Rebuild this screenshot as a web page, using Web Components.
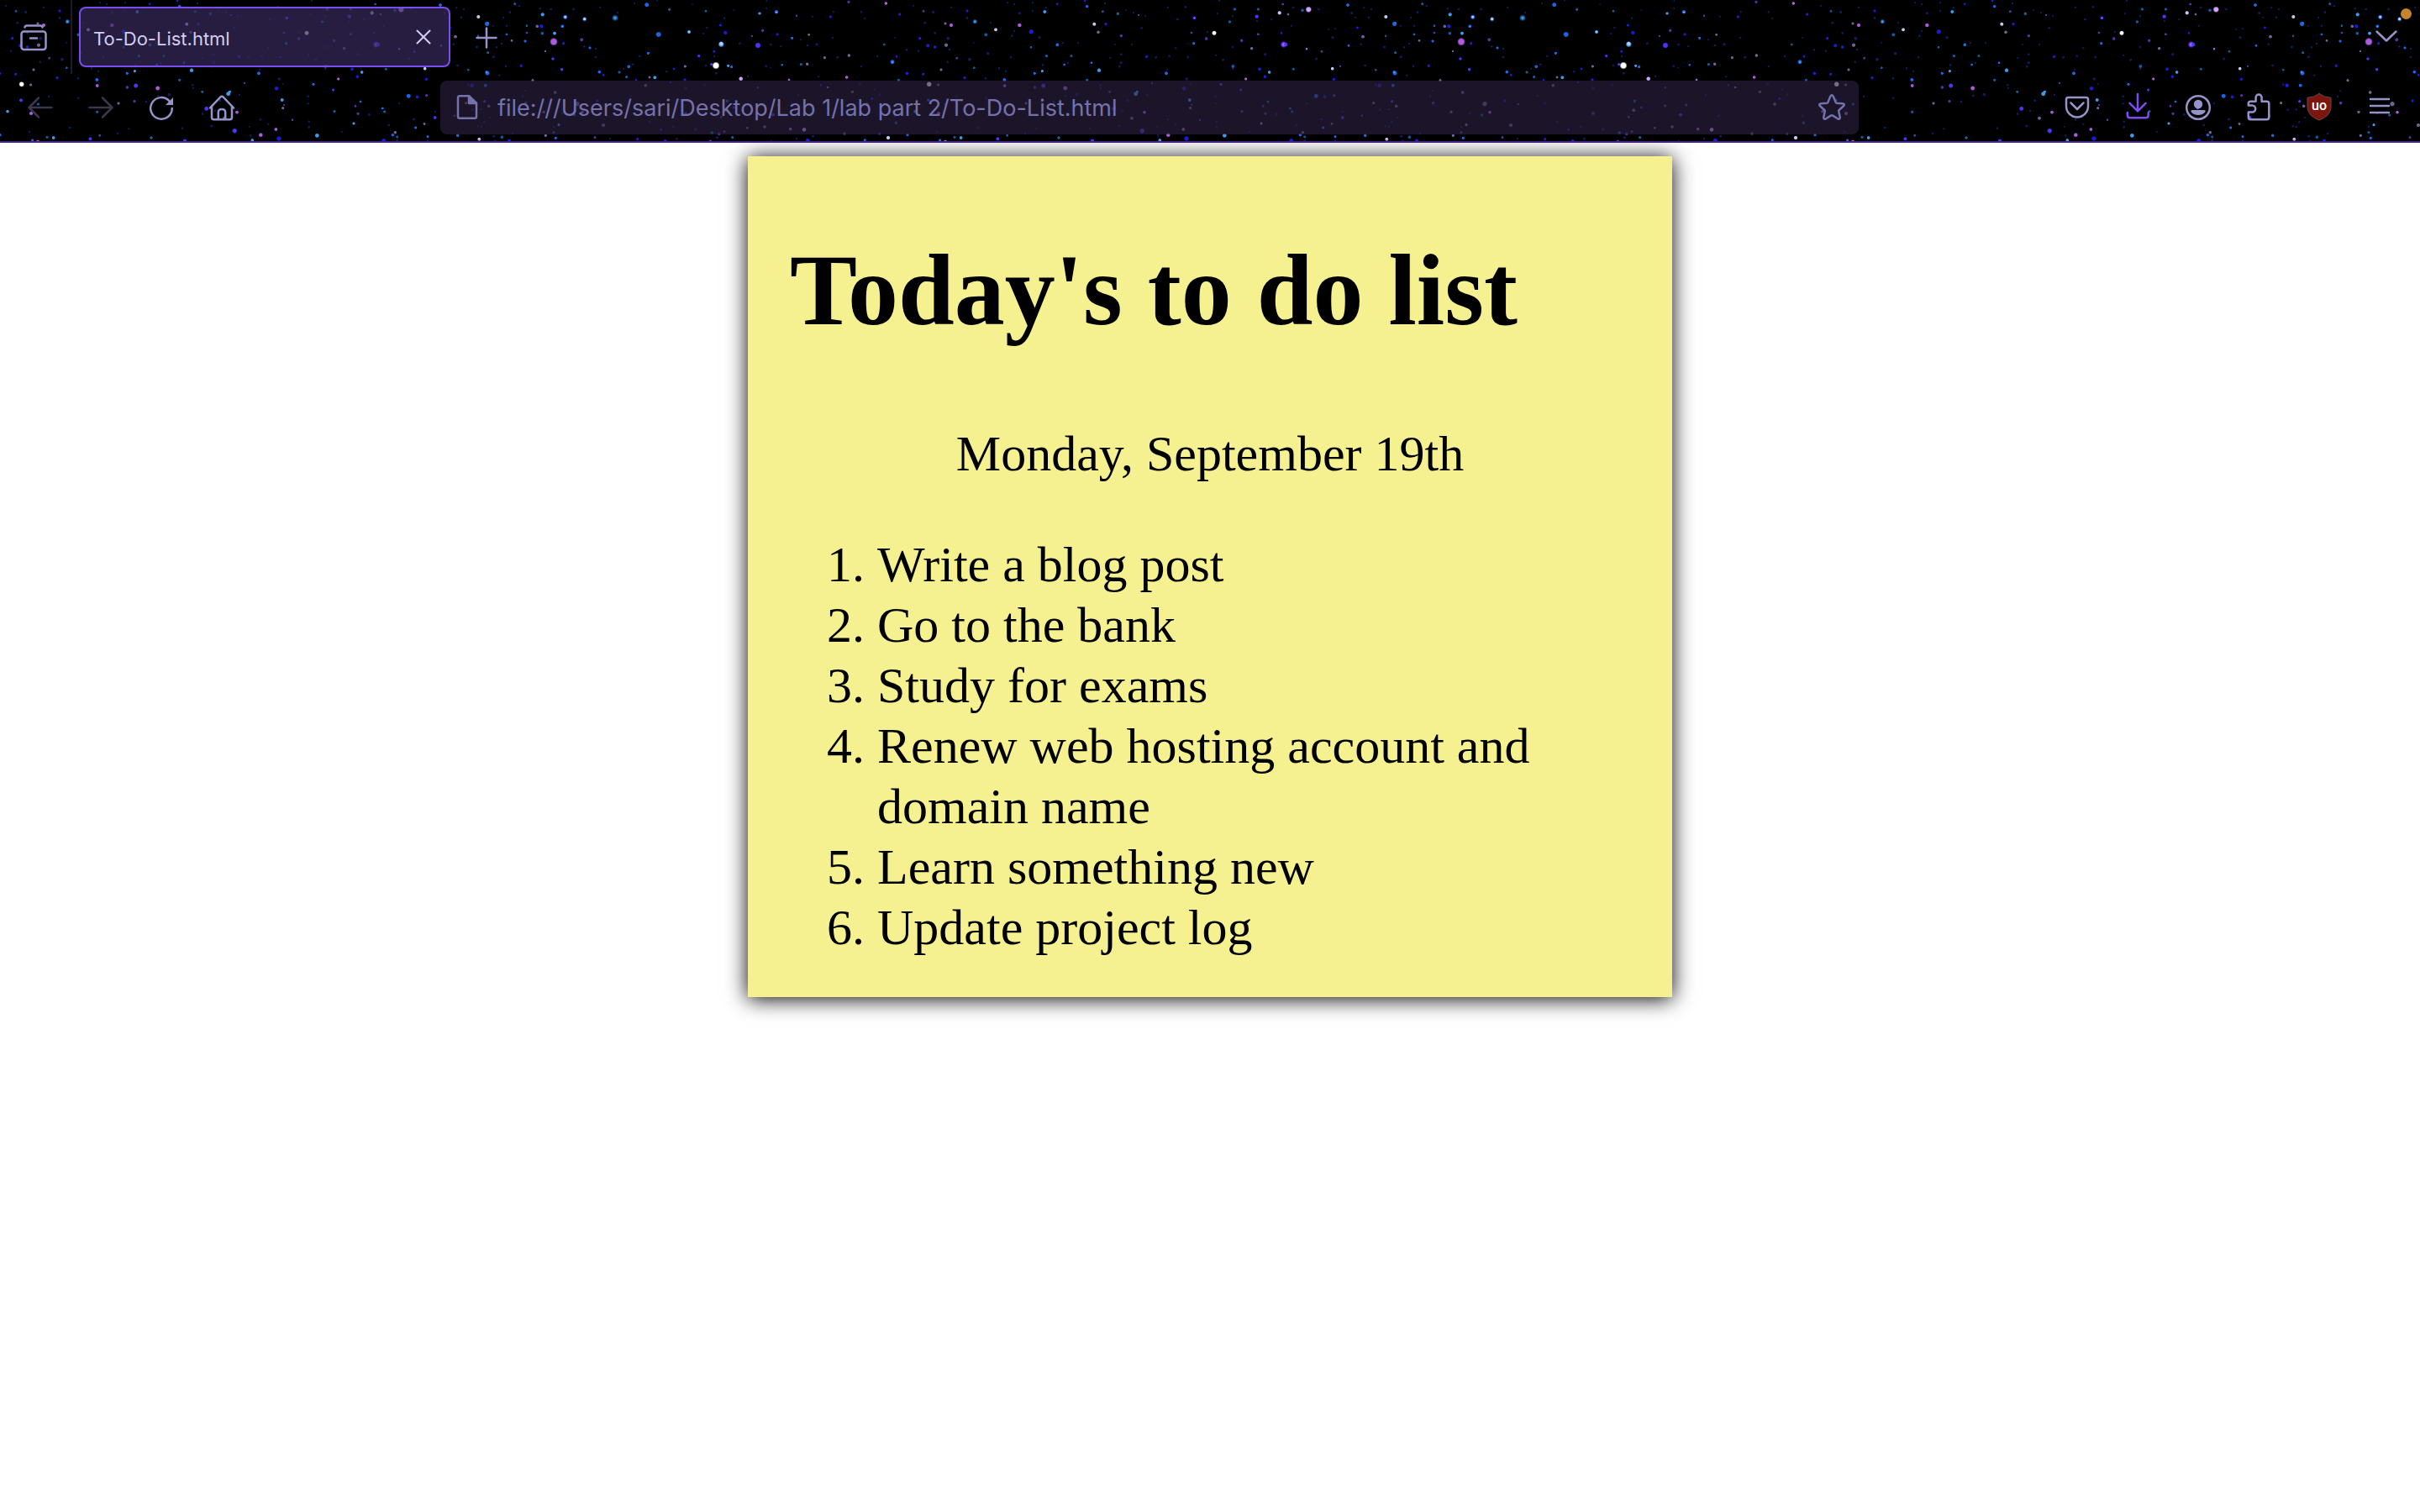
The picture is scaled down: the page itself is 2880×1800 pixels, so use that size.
<!DOCTYPE html>
<html lang="en">
<head>
<meta charset="utf-8">
<title>To-Do-List.html</title>
<style>
  html { background: #fff; }
  body { margin: 0; }
</style>
</head>
<body>
<browser-window>
  <sticky-note>
    <span slot="title">Today's to do list</span>
    <span slot="date">Monday, September 19th</span>
    <todo-list items="Write a blog post|Go to the bank|Study for exams|Renew web hosting account and domain name|Learn something new|Update project log"></todo-list>
  </sticky-note>
</browser-window>

<script>
const ICONS = {
  sidebar: '<rect x="1.5" y="9.5" width="29" height="21.5" rx="3"/><path d="M5.5 4.5Q6 2.5 8 2.5H24Q26 2.5 26.500 4.500"/><path d="M12 17.500H20"/>',
  close: '<path d="M8.500 8.500l15 15M23.500 8.500l-15 15"/>',
  plus: '<path d="M4.500 17H27.500M16 5.500V28.500"/>',
  chevron: '<path d="M4.500 9.500L16 20.500 27.500 9.500"/>',
  back: '<path d="M2.500 16H29.500M14 4.500L2.500 16 14 27.500"/>',
  forward: '<path d="M2.500 16H29.500M18 4.500L29.500 16 18 27.500"/>',
  reload: '<path d="M28.800 17A12.800 12.800 0 1 1 25.500 8.300"/><path d="M30 4V13H21Z" fill="currentColor" stroke="none"/>',
  home: '<path d="M2 16.500L14.200 3.600Q16 1.800 17.800 3.600L30 16.500"/><path d="M4 14.500V27.500Q4 30.300 6.500 30.300H25.500Q28 30.300 28 27.500V14.500"/><path d="M11.800 30V21.500Q11.800 18 16 18T20.200 21.500V30"/>',
  page: '<path d="M18 2.200H7Q5 2.200 5 4.500V26.500Q5 28.800 7 28.800H25Q27 28.800 27 26.500V11Z"/><path d="M18 2.200V11H27Z" fill="currentColor"/>',
  star: '<path d="M14.300 2.600Q16 -.3 17.700 2.600L20.600 9.700Q21 10.600 22 10.700L28.800 11.200Q32.300 11.700 29.900 14.300L24.700 19Q24 19.700 24.200 20.600L25.700 27.300Q26 30.700 23 29.300L17.200 25.600Q16 24.900 14.800 25.600L9 29.300Q6 30.700 6.300 27.300L7.800 20.600Q8 19.700 7.300 19L2.100 14.300Q-.3 11.700 3.200 11.200L10 10.700Q11 10.600 11.400 9.700Z"/>',
  pocket: '<path d="M5.500 4H26.500Q29 4 29 6.500V14.500A13 13 0 0 1 3 14.500V6.500Q3 4 5.500 4Z"/><path d="M8.500 10.500L16 18 23.500 10.500"/>',
  download: '<path d="M16 0V20M6.500 10.800L16 20.300 25.500 10.800"/><path d="M3.800 22V25Q3.800 28.300 7 28.300H25.500Q28.700 28.300 28.700 25V22"/>',
  account: '<circle cx="16" cy="16" r="13.800"/><circle cx="16" cy="12" r="5.200" fill="currentColor" stroke="none"/><path d="M9 19H23Q25.500 19 24.200 21.200Q21.500 25 16 25T7.800 21.200Q6.500 19 9 19Z" fill="currentColor" stroke="none"/>',
  puzzle: '<path d="M12.600 8.800V4A3.500 3.500 0 0 1 19.600 4V8.800H25.500Q28.300 8.800 28.300 11.500V27.500Q28.300 30.200 25.500 30.200H6.500Q3.800 30.200 3.800 27.500V21.500H8.200A4 4 0 0 0 8.200 13.500H3.800V11.500Q3.800 8.800 6.500 8.800Z"/>',
  shield: '<path d="M16-.5Q10 4 2 4.300V14.500C2 23 8 28 16 31C24 28 30 23 30 14.500V4.300Q22 4 16-.5Z" fill="#7b150e" stroke="#6a4a4a" stroke-width="1"/><text x="16" y="18.500" text-anchor="middle" font-family="Roboto, sans-serif" font-size="16" font-weight="500" fill="#fff" stroke="none">uo</text>',
  menu: '<path d="M5 6H27M5 14H27M5 22H27"/>'
};

/* Star positions, four 270px panels to a 1080px tile: x, y (thirds of a pixel), colour key, radius. */
const INK = { b:'#1c66ea', d:'#1420d8', n:'#0b2a8c', c:'#3f9bea', w:'#b9cdf2', W:'#ffffff', p:'#b05adf', v:'#5a32a8', g:'#6a6690', i:'#4c32ff', l:'#cfa2ff', t:'#155a9c' };
const PANELS = [
 '36,64,t,4 36,64,c,2 45,44,n,1.5 149,17,b,3 106,12,n,1.3 187,2,n,1.2 230,34,t,2 312,15,n,1 360,40,t,1.8 460,35,n,1.3 426,65,n,1.6 412,90,d,2 364,99,n,1.6 430,117,d,2.6 351,120,n,1.4 191,123,b,3.6 300,114,c,2.5 301,114,w,1.3 415,158,c,3.8 415,156,w,2.6 481,155,n,1.8 525,129,v,1.4 563,109,v,2 546,162,i,3.8 592,159,n,1.8 628,166,n,1.4 615,123,d,2 668,136,b,2 728,124,g,1.8 699,142,n,1.4 723,162,n,1.8 756,158,n,2 552,48,c,2.1 612,43,b,2.7 612,43,w,1 684,56,v,1.6 740,59,n,1.4 577,29,n,1.4 577,3,n,1.2 805,60,d,2 784,206,g,2 722,229,g,2.2 700,230,t,2 632,232,b,1.6 575,236,n,1.8 590,242,n,1.2 154,190,b,2 124,200,n,1.6 335,200,i,2 389,184,d,1.8 391,200,n,1.5 286,237,g,2 396,234,W,4.6 380,230,i,2 440,235,c,2 452,239,b,2 397,262,n,1.8 360,235,n,1.6 85,238,b,2.3 100,230,n,1.6 66,245,n,1.4 51,258,t,2 77,275,t,2 246,246,d,1.8 220,256,n,1.6 159,276,g,1.9 178,277,c,2.4 111,286,d,1.7 285,285,d,2 485,281,l,2.8 511,272,n,1.6 657,285,p,1.8 763,274,n,1.4 145,305,g,2.3 233,294,d,1.6 288,315,n,2 356,304,n,1.6 545,313,v,1.6 770,304,d,1.6 795,312,p,1.8 115,370,n,1.8 90,342,n,1.5 20,372,v,1.8 288,405,t,2.2 436,361,t,2.2 433,394,g,2.4 415,418,t,1.8 460,384,v,1.8 545,378,t,2 620,375,v,2 600,410,i,2.4 735,415,n,1.8 690,340,n,1.5 158,435,n,1.8 200,463,d,2 243,452,n,1.8 323,462,n,2.2 382,474,t,2.3 407,478,v,2.2 426,470,v,2 455,491,t,2 400,492,n,2 508,457,g,1.8 570,453,g,2.2 662,461,p,2.2 711,463,l,2.8 724,502,d,3 684,496,n,1.6 743,487,n,1.8 116,497,d,2 256,496,n,1.8 215,504,d,2.4 376,505,v,2.2 18,495,n,1.4 594,505,n,1.4',
 '193,12,p,2.2 60,7,v,2 105,43,n,1.6 118,65,n,1.4 242,51,d,2 291,20,n,1.4 327,40,t,1.8 362,43,n,2 332,82,n,1.8 405,84,g,2 426,90,p,2.5 426,27,n,1.4 483,39,d,2 483,64,n,1.8 511,77,t,3 511,77,c,1.7 585,106,w,2.4 567,82,n,1.5 550,124,t,2.4 643,128,n,1.8 651,111,n,1.4 670,90,p,2.7 670,47,n,2 627,10,n,1.4 651,15,n,1.4 716,10,n,1.4 716,38,n,1.4 760,42,c,2.4 764,27,n,1.4 805,14,d,1.6 712,113,d,3.2 741,134,n,2 805,160,b,2.4 711,169,t,1.8 766,200,t,2.1 753,232,n,1.8 751,254,c,2 724,262,b,2 314,137,d,2.1 343,163,d,2.5 368,168,d,2.2 368,118,n,1.7 415,137,n,2.4 408,161,g,2.6 420,177,n,1.8 187,159,t,1.8 225,134,n,1.2 267,178,n,1.8 308,182,n,1.6 231,202,d,1.8 216,221,b,3 216,221,c,1.5 163,200,n,1.5 61,198,g,2.2 20,205,n,1.8 3,135,n,1.7 5,43,n,1.4 104,238,n,1.5 53,276,p,2.2 268,262,d,2.3 326,265,d,1.9 238,286,t,1.9 390,249,g,2 413,221,n,1.6 446,208,v,1.7 492,212,n,2.3 506,152,n,1.3 508,242,t,1.8 557,191,n,2.2 639,205,n,1.7 597,244,n,1.6 621,254,n,1.6 549,280,n,1.7 474,278,d,2 616,285,b,2.4 347,301,W,3.4 380,303,g,2 100,300,n,2 73,328,g,2 153,320,n,1.8 172,338,n,1.8 143,352,d,2 126,372,g,2.3 345,358,i,2.4 297,398,c,2.2 381,405,p,2.5 406,372,t,2 229,439,t,2.2 225,415,n,1.7 45,477,g,2 170,478,v,1.8 270,482,b,2 201,492,w,2.6 118,500,b,1.8 386,501,b,2 405,506,p,2.5 438,490,t,2 461,492,c,2.3 375,471,n,1.8 520,456,n,1.8 617,306,p,2.3 617,400,t,2 693,369,g,2 724,312,v,2.1 755,306,i,3.1 750,362,v,2 792,364,n,1.7 592,496,i,2.4 626,484,t,1.8 690,476,n,1.6 730,460,n,1.4 550,350,n,1.6 445,344,n,1.6',
 '127,86,w,2.5 168,86,d,2 141,115,g,2.2 101,23,b,2.1 94,2,d,1.6 157,41,t,1.8 211,49,t,2.2 165,12,n,1.5 285,54,v,1.6 309,58,n,1.5 267,45,n,1.3 239,37,n,1.2 223,128,v,2.1 296,100,n,1.6 424,69,n,1.8 453,25,n,1.8 484,64,i,2.3 484,64,l,.8 390,27,n,1.2 482,155,b,2 474,117,v,1.8 527,138,v,2.2 530,115,n,1.5 555,118,W,3 566,49,n,1.4 573,2,n,1.6 628,33,t,2.1 621,58,n,1.6 610,78,t,2.1 653,145,v,2.1 689,173,c,2 689,173,g,1.8 621,168,n,1.7 712,122,v,1.8 795,118,d,1.7 712,33,t,2 707,59,i,2.7 707,75,n,1.4 788,46,w,2.6 800,15,v,1.8 760,70,n,1.5 803,159,i,4.2 803,159,p,2.4 737,194,n,2 587,214,n,1.8 562,197,n,1.5 461,204,n,1.9 418,172,n,1.6 395,200,n,1.8 347,205,n,1.8 314,202,d,2.1 262,158,n,1.5 223,194,n,1.7 223,224,n,2 217,238,n,1.8 201,158,n,1.2 184,207,n,1.4 144,251,c,2.7 117,224,b,1.8 45,200,t,1.9 33,225,n,1.8 20,231,b,1.8 15,154,n,1.5 69,153,n,1.3 101,286,t,2 384,262,b,2.4 387,248,n,1.4 457,282,n,2.1 622,237,t,2.4 622,246,n,1.5 668,282,p,2 717,247,d,2.3 736,274,d,2.2 752,258,c,2.2 23,315,p,3 64,338,n,2.3 25,342,n,1.8 148,304,n,1.7 150,315,n,1.5 182,328,t,1.9 275,335,c,3 280,328,c,2 333,297,v,1.4 315,339,n,1.4 447,316,d,2.8 467,357,c,2.4 470,386,g,2 475,375,v,1.4 470,299,n,1.3 579,301,b,2 560,344,n,1.7 560,370,n,1.4 650,321,i,1.9 747,363,b,1.8 729,379,v,1.8 654,398,t,2 738,406,v,2 778,409,n,1.9 723,441,c,2 197,388,i,3 183,407,n,1.8 245,359,n,1.9 306,401,p,2.3 228,395,n,1.6 261,422,g,2.4 298,467,i,3.3 390,427,n,1.8 418,443,n,1.6 445,462,p,2.3 504,428,v,1.7 351,452,n,1.3 391,482,p,2.8 361,501,c,2.3 456,495,d,3.2 592,484,c,2.9 563,454,n,1.8 563,434,n,1.6 120,502,i,2.3 111,458,n,1.7 0,492,t,2.2 215,450,n,1.8 355,484,n,1.6 680,470,n,1.4',
 '82,34,l,3.8 60,37,t,2.2 28,27,n,1.6 9,51,g,1.8 118,33,n,1.8 222,18,b,2.3 236,47,n,1.9 250,62,n,1.4 296,62,n,1.7 280,28,n,1.4 306,33,n,1.4 256,99,d,1.9 276,131,g,2.4 225,163,b,1.8 168,134,n,2 154,104,n,1.3 177,103,n,1.3 269,158,n,1.7 358,60,w,2.5 389,85,c,2.9 389,85,b,3 357,128,t,1.6 352,168,n,1.9 392,188,t,1.9 412,203,n,1.9 423,169,n,1.7 441,156,n,1.7 459,123,b,1.8 460,92,n,1.6 447,63,n,1.4 471,44,n,1.8 477,145,g,1.8 488,14,t,1.9 503,21,n,1.6 531,92,t,1.8 531,117,v,1.8 525,147,b,2 587,52,c,2.6 579,31,n,1.6 617,33,n,1.6 568,94,g,2.2 583,94,d,2.7 586,119,t,2.2 630,119,c,2.4 658,94,b,2.4 658,94,c,1.1 668,61,b,3.1 668,61,w,1.8 737,68,t,3.2 737,68,w,2 698,33,n,1.8 792,27,n,1.5 627,149,p,5 662,155,d,2 727,142,v,2.4 736,166,n,1.7 756,171,b,2 777,174,n,1.5 597,183,g,1.6 624,210,i,2.1 656,248,i,2.2 790,257,b,2.3 776,204,n,1.7 804,268,d,1.8 511,235,d,2.1 456,236,n,1.7 390,261,b,3.1 387,257,c,1.7 433,269,n,1.5 322,250,t,1.7 284,234,n,1.8 167,245,w,2.3 195,236,v,1.4 110,210,n,1.9 129,184,t,1.8 75,175,p,1.7 28,247,t,1.9 172,283,d,2 552,287,g,2 20,92,n,1.4 1,159,i,2.6 411,92,n,1.3 109,343,b,3 140,346,d,2.4 173,341,v,2 335,305,d,2.7 322,302,n,1.8 383,305,b,2.4 380,362,i,2 314,368,g,2 395,379,g,2.2 338,392,n,1.7 368,391,n,1.6 527,368,v,2.2 516,344,n,1.6 526,325,n,1.4 632,330,g,2.3 711,371,w,2.6 711,371,g,3.2 783,360,d,2 729,401,p,2.2 701,411,t,2 657,405,n,1.5 591,400,g,2.1 645,446,c,2 627,453,n,1.7 627,473,t,2 804,447,g,2.5 16,387,b,1.8 23,399,t,2 75,369,n,1.3 128,426,n,1.9 165,442,g,1.9 134,456,b,2 203,420,i,2.3 272,413,v,1.7 379,436,n,1.6 368,453,n,1.7 356,451,n,1.7 38,447,n,1.7 61,473,g,2.2 52,482,b,2.1 68,489,t,1.9 20,502,d,2.8 68,502,n,1.8 177,488,b,1.9 177,503,n,1.6 284,484,b,2.2 361,497,l,2.4 413,487,n,1.9 442,490,t,2.2 418,504,n,1.8 468,502,d,2.4 480,477,n,1.8 598,484,g,2.1 634,493,b,2 774,491,v,1.9 398,420,n,1.5 203,399,n,1.3'
];

const define = (name, markup, setup) => {
  const template = document.createElement('template');
  template.innerHTML = markup;
  customElements.define(name, class extends HTMLElement {
    connectedCallback() {
      if (this.shadowRoot) return;
      this.attachShadow({ mode: 'open' }).append(template.content.cloneNode(true));
      if (setup) setup(this, this.shadowRoot);
    }
  });
};

define('star-field', `
  <style>
    :host { display: block; position: absolute; inset: 0; background: #000; overflow: hidden; }
    #sky { height: 100%; }
    svg { display: block; width: 100%; height: 100%; }
  </style>
  <div id="sky"></div>`,
  (host, root) => {
    const dots = PANELS.map((panel, i) => panel.split(' ').map(entry => {
      const [x, y, key, r] = entry.split(',');
      const dim = key === 'n' ? .7 : 1;
      const cx = (i * 270 + x / 3).toFixed(1), cy = (y / 3).toFixed(1);
      return `<circle cx="${cx}" cy="${cy}" r="${r}" fill="url(#${'ink' + key.charCodeAt(0)})" opacity="${dim}"/>`;
    }).join('')).join('');
    const inks = Object.entries(INK).map(([key, colour]) =>
      `<radialGradient id="ink${key.charCodeAt(0)}"><stop offset=".6" stop-color="${colour}"/><stop offset="1" stop-color="${colour}" stop-opacity="0"/></radialGradient>`).join('');
    root.getElementById('sky').innerHTML =
      `<svg aria-hidden="true"><defs>${inks}<pattern id="tile" x="-360" y="0" width="1080" height="170" patternUnits="userSpaceOnUse">${dots}</pattern></defs><rect width="100%" height="100%" fill="url(#tile)"/></svg>`;
  });

define('ui-icon', `
  <style>
    :host { display: block; width: 32px; height: 32px; flex: none; }
    svg { display: block; width: 32px; height: 32px; overflow: visible; fill: none; stroke: currentColor; stroke-width: var(--stroke, 2.5); stroke-linecap: round; stroke-linejoin: round; }
  </style><div></div>`,
  (host, root) => {
    root.querySelector('div').innerHTML = `<svg viewBox="0 0 32 32" aria-hidden="true">${ICONS[host.getAttribute('name')]}</svg>`;
  });

define('tool-button', `
  <style>
    :host { display: block; flex: none; width: 72px; color: #9593c8; }
    :host([dim]) { color: #3c374f; }
    :host([active]) { color: #7a4cf2; }
    button { display: flex; align-items: center; justify-content: center; width: 100%; height: 64px; padding: 0; border: 0; border-radius: 8px; background: none; color: inherit; }
  </style>
  <button type="button"><ui-icon></ui-icon></button>`,
  (host, root) => {
    const button = root.querySelector('button');
    button.setAttribute('aria-label', host.getAttribute('label'));
    button.disabled = host.hasAttribute('dim');
    const icon = document.createElement('ui-icon');
    icon.setAttribute('name', host.getAttribute('icon'));
    button.replaceChildren(icon);
  });

define('browser-tab', `
  <style>
    :host { display: flex; align-items: center; box-sizing: border-box; width: 442px; height: 72px; padding: 0 14px 0 15px; border: 2px solid #7b4df0; border-radius: 8px; background: rgba(54, 41, 92, .7); color: #d2cdf0; }
    button { padding: 0; border: 0; background: none; color: inherit; font: 22px/32px Inter, sans-serif; }
    .title { flex: 1; padding-top: 4px; text-align: left; }
  </style>
  <button class="title" type="button" role="tab" aria-selected="true"><slot></slot></button>
  <button type="button" aria-label="Close tab"><ui-icon name="close" style="--stroke: 2"></ui-icon></button>`);

define('tab-strip', `
  <style>
    :host { display: flex; align-items: center; height: 88px; box-sizing: border-box; padding: 0 4px; }
    .rule { align-self: stretch; width: 2px; margin: 0 8px; background: #1d1a2a; }
    .tab-slot { flex: 1; display: flex; align-items: center; gap: 7px; }
    .dot { position: absolute; top: 10px; right: 10px; width: 13px; height: 13px; border-radius: 50%; background: #c68431; }
  </style>
  <tool-button icon="sidebar" label="Firefox view"></tool-button>
  <div class="rule"></div>
  <div class="tab-slot">
    <browser-tab>To-Do-List.html</browser-tab>
    <tool-button icon="plus" label="New tab"></tool-button>
  </div>
  <tool-button icon="chevron" label="List all tabs"></tool-button>
  <div class="dot"></div>`);

define('address-bar', `
  <style>
    :host { display: flex; align-items: center; gap: 20px; flex: 1; height: 64px; margin: 0 224px; padding: 0 16px; border-radius: 8px; box-sizing: border-box; background: rgba(44, 33, 64, .64); color: #7472ad; }
    input { flex: 1; min-width: 0; padding: 2px 0 0; border: 0; outline: 0; background: none; color: inherit; font: 27px/40px Inter, sans-serif; }
    button { padding: 0; border: 0; background: none; color: inherit; }
  </style>
  <ui-icon name="page"></ui-icon>
  <input type="text" aria-label="Address" value="file:///Users/sari/Desktop/Lab 1/lab part 2/To-Do-List.html">
  <button type="button" aria-label="Bookmark this page"><ui-icon name="star"></ui-icon></button>`);

define('nav-bar', `
  <style>
    :host { display: flex; align-items: center; height: 80px; padding: 0 12px; border-bottom: 2px solid #432682; }
  </style>
  <tool-button icon="back" label="Back" dim></tool-button>
  <tool-button icon="forward" label="Forward" dim></tool-button>
  <tool-button icon="reload" label="Reload"></tool-button>
  <tool-button icon="home" label="Home"></tool-button>
  <address-bar></address-bar>
  <tool-button icon="pocket" label="Save to Pocket"></tool-button>
  <tool-button icon="download" label="Downloads" active></tool-button>
  <tool-button icon="account" label="Account"></tool-button>
  <tool-button icon="puzzle" label="Extensions"></tool-button>
  <tool-button icon="shield" label="Content blocker"></tool-button>
  <tool-button icon="menu" label="Menu"></tool-button>`);

define('browser-window', `
  <style>
    :host { display: flex; flex-direction: column; min-height: 100vh; }
    header { position: relative; z-index: 1; }
    .bars { position: relative; }
    main { flex: 1; display: flex; justify-content: center; align-items: flex-start; padding: 16px; }
  </style>
  <header>
    <star-field></star-field>
    <div class="bars"><tab-strip></tab-strip><nav-bar></nav-bar></div>
  </header>
  <main><slot></slot></main>`);

define('sticky-note', `
  <style>
    :host { display: block; box-sizing: border-box; width: 1100px; padding: 88px 50px 47px; background: #f6f190; box-shadow: 0 2px 24px #000; color: #000; font: 60px/72px "Liberation Serif", serif; }
    h1 { margin: 0 0 86px; font-size: 120px; line-height: 144px; font-weight: 700; }
    p { margin: 0 0 60px; text-align: center; }
  </style>
  <h1><slot name="title"></slot></h1>
  <p><slot name="date"></slot></p>
  <slot></slot>`);

define('todo-list', `
  <style>
    :host { display: block; }
    ol { margin: 0; padding: 0 0 0 104px; }
  </style><ol></ol>`,
  (host, root) => {
    root.querySelector('ol').append(...host.getAttribute('items').split('|').map(text => {
      const item = document.createElement('li');
      item.textContent = text;
      return item;
    }));
  });
</script>
</body>
</html>
